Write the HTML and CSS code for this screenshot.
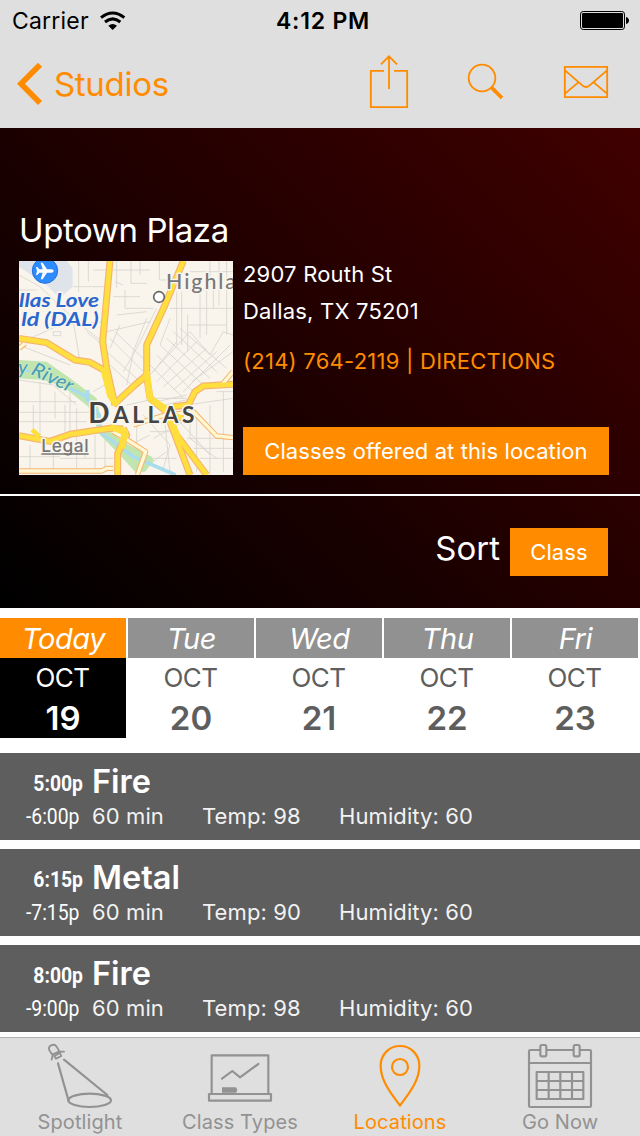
FILE: index.html
```html
<!DOCTYPE html>
<html lang="en">
<head>
    <meta charset="UTF-8">
    <meta name="viewport" content="width=device-width, initial-scale=1.0">
    <title>Uptown Plaza</title>
    <link rel="stylesheet" href="styles.css">
</head>
<body>
    <header class="top">
        <div class="status">
            <div class="carrier">
                <span>Carrier</span>
                <svg class="wifi" viewBox="300 30 78 60">
                    <path d="M303 50Q338 22 373 50" fill="none" stroke="#000" stroke-width="9"/>
                    <path d="M315 63Q338 44 361 63" fill="none" stroke="#000" stroke-width="9"/>
                    <path d="M325 74Q338 64 351 74L338 87Z"/>
                </svg>
            </div>
            <div class="clock">4:12 PM</div>
            <svg class="battery" viewBox="780 33 150 57">
                <rect x="781.5" y="34.5" width="132" height="54" rx="8" fill="none" stroke="#000" stroke-width="3"/>
                <rect x="786" y="39" width="123" height="45" rx="4"/>
                <path d="M918 51q9 3 9 10.500t-9 10.500z"/>
            </svg>
        </div>
        <nav class="nav">
            <a class="back">
                <svg class="chevron" viewBox="48 186 81 132">
                    <path d="M120 194L63 251.500L120 309" fill="none" stroke="#ff8c00" stroke-width="17"/>
                </svg>
                <span>Studios</span>
            </a>
            <div class="actions">
                <svg class="share" viewBox="144 159 126 168">
                    <path d="M192 212.500H152.500V321.500H261.500V212.500H222M207 267V169M183 193L207 169L231 193"/>
                </svg>
                <svg class="search" viewBox="441 186 114 114">
                    <circle cx="486" cy="234" r="40"/>
                    <path d="M514 262L546 294"/>
                </svg>
                <svg class="mail" viewBox="729 195 138 102">
                    <path d="M734.500 200.500H861.500V291.500H734.500ZM735 211L787 256Q798 266 809 256L861 211M735 281L775 247M861 281L821 247"/>
                </svg>
            </div>
        </nav>
    </header>

    <section class="studio">
        <div class="info">
            <h1>Uptown Plaza</h1>
            <div class="detail">
                <svg class="map" viewBox="27 168 642 642">
                    <rect x="27" y="168" width="642" height="642" fill="#f9f5ed"/>
                    <path d="M27 168H170L188 190V245L150 280L110 240L27 185Z" fill="#dfe4ea"/>
                    <g fill="none" stroke="#d6d4ce" stroke-width="2.500">
                        <path d="M190 245H290M206 168V260M235 168V230M250 195H290M27 210L90 245L200 350L290 420M320 168V250M363 168V235H410M390 168V210M310 195H420M315 230L340 240M448 168V225H470M310 275H390M345 255V310H430M320 330L410 320M27 255H80M27 420L180 480M60 400L150 360L280 350M130 380h22v12h-22zM190 350L210 470M230 380L290 430"/>
                        <path d="M500 260V420M515 260V420M533 330V440M570 240V400M590 250V390M610 220V310M650 168V390M480 310H669M530 360H650M480 340L450 420M540 200H669M600 168V235M627 168V300"/>
                        <path d="M300 400L400 500M315 380L410 470M290 440L385 525M300 480L365 540M410 520L540 380L600 450L640 380L669 390M420 480L520 580M440 450L550 560M450 420L580 540M470 400L600 520M490 380L620 500M510 370L650 490M430 500L500 410M440 530L560 410M460 545L590 430M490 555L620 440M520 560L660 420M545 530L669 440M340 500L380 430L440 310M350 540L370 440L410 340M330 360L300 430M290 380L420 350"/>
                        <path d="M27 525L130 540L200 600M90 530V690M27 590H200M27 622H240M27 650H230M70 600V690M135 560V640M165 600V680M180 560V700M200 610V790M250 560L300 530M130 730V800M27 755H150M60 720V800M150 760H310M225 700V760M255 690V800M285 700V790"/>
                        <path d="M440 590L530 570M420 580H530M440 605L550 580M350 600L420 585M380 640V740M400 630L480 720L460 790M420 680H500M430 700L520 650M540 640V700L620 760M560 620V800M600 600V810M640 560V800M530 700H669M550 730H669M570 760H669M530 600L669 580M500 640L600 750M360 720L420 690M400 790L470 740M460 610L480 800M620 560H669M390 760H500"/>
                    </g>
                    <path d="M27 465L110 470L180 520L260 580L275 660L340 710L425 755L432 768L405 800H375L330 750L270 690L235 605L160 545L100 525L27 520Z" fill="#c1e5ae"/>
                    <path d="M180 550L225 572L245 600L268 630L268 680L330 725L370 755L497 810M233 555V590" fill="none" stroke="#a9dcec" stroke-width="11"/>
                    <path d="M27 497H60" stroke="#a9dcec" stroke-width="8"/>
                    <g fill="none" stroke="#f6b36f" stroke-linejoin="round">
                        <path d="M27 798H275L290 790H310M310 680L345 700L407 740L382 810M480 630L550 620L620 693L669 698M480 625L370 660M669 500L635 540M27 430L45 415" stroke-width="16"/>
                        <path d="M300 168L288 300L278 410L290 490L315 600M520 168L465 300L410 420V515L420 580L475 625L520 640M310 600L375 540L410 510M27 400L110 413L195 465L240 472L290 500M27 692L120 709L180 688L300 670L340 672M470 625L495 690L540 810M500 690L590 810M340 670L350 690L323 745V810M490 605L535 600L555 560L580 543L669 538" stroke-width="21"/>
                    </g>
                    <path d="M27 798H275L290 790H310M310 680L345 700L407 740L382 810M480 630L550 620L620 693L669 698M480 625L370 660M669 500L635 540M27 430L45 415" fill="none" stroke="#fff8d2" stroke-width="10"/>
                    <g fill="none" stroke="#ffdf3d" stroke-linejoin="round">
                        <path d="M300 168L288 300L278 410L290 490L315 600M520 168L465 300L410 420V515L420 580L475 625L520 640M310 600L375 540L410 510M27 400L110 413L195 465L240 472L290 500M27 692L120 709L180 688L300 670L340 672M470 625L495 690L540 810M500 690L590 810M340 670L350 690L323 745V810M490 605L535 600L555 560L580 543L669 538" stroke-width="14"/>
                        <path d="M280 490L300 570L320 600M410 500L420 580L480 620M300 665L345 680L335 730M480 640L510 710" stroke-width="19"/>
                        <path d="M66 674L88 694" stroke-width="14"/>
                    </g>
                    <circle cx="105" cy="197" r="38" fill="#2f8cff" stroke="#1e6fe0" stroke-width="3"/>
                    <path d="M131 198Q131 193 124 193H111L98 173H92L98 193H88L82 186H78L81 198L78 210H82L88 203H98L92 223H98L111 203H124Q131 203 131 198Z" fill="#fff"/>
                    <circle cx="447" cy="276" r="16" fill="#fff" stroke="#666" stroke-width="5"/>
                    <g class="labels">
                        <text class="airport" x="27" y="305" textLength="240" lengthAdjust="spacingAndGlyphs">llas Love</text>
                        <text class="airport" x="34" y="364" textLength="232" lengthAdjust="spacingAndGlyphs">ld (DAL)</text>
                        <text class="area" x="468" y="251" textLength="210">Highla</text>
                        <text class="river" transform="translate(24 506) rotate(2)">y</text>
                        <text class="river" transform="translate(60 507) rotate(25)" textLength="132" lengthAdjust="spacingAndGlyphs">River</text>
                        <text class="city" x="235" y="655" textLength="318"><tspan class="cap">D</tspan>ALLAS</text>
                        <text class="legal" x="94" y="741" textLength="142">Legal</text>
                    </g>
                    <path d="M94 747H236" stroke="#777" stroke-width="4"/>
                </svg>
                <div class="contact">
                    <div class="street">2907 Routh St</div>
                    <div class="city-line">Dallas, TX 75201</div>
                    <div class="links"><a>(214) 764-2119</a> | <a>DIRECTIONS</a></div>
                    <a class="btn offered">Classes offered at this location</a>
                </div>
            </div>
        </div>
        <div class="sort">
            <span class="sort-label">Sort</span>
            <a class="btn sort-btn">Class</a>
        </div>
    </section>

    <section class="days">
        <div class="day today"><div class="name">Today</div><div class="month">OCT</div><div class="date">19</div></div>
        <div class="day"><div class="name">Tue</div><div class="month">OCT</div><div class="date">20</div></div>
        <div class="day"><div class="name">Wed</div><div class="month">OCT</div><div class="date">21</div></div>
        <div class="day"><div class="name">Thu</div><div class="month">OCT</div><div class="date">22</div></div>
        <div class="day"><div class="name">Fri</div><div class="month">OCT</div><div class="date">23</div></div>
    </section>

    <main class="classes">
        <div class="class">
            <div class="time"><b>5:00p</b><span>-6:00p</span></div>
            <div class="about">
                <h2>Fire</h2>
                <div class="facts"><span>60 min</span><span>Temp: 98</span><span>Humidity: 60</span></div>
            </div>
        </div>
        <div class="class">
            <div class="time"><b>6:15p</b><span>-7:15p</span></div>
            <div class="about">
                <h2>Metal</h2>
                <div class="facts"><span>60 min</span><span>Temp: 90</span><span>Humidity: 60</span></div>
            </div>
        </div>
        <div class="class">
            <div class="time"><b>8:00p</b><span>-9:00p</span></div>
            <div class="about">
                <h2>Fire</h2>
                <div class="facts"><span>60 min</span><span>Temp: 98</span><span>Humidity: 60</span></div>
            </div>
        </div>
    </main>

    <footer class="tabs">
        <a class="tab">
            <svg viewBox="132 48 216 204">
                <path d="M174 115L206 228M192 104L322 210"/>
                <ellipse cx="269" cy="226" rx="64" ry="20"/>
                <path class="lamp" d="M157 89L148 76Q144 66 153 61Q164 56 170 65L178 79M157 89L178 79M163 93L180 84L184 93L168 101ZM155 104L158 90M179 79L192 80"/>
            </svg>
            <span>Spotlight</span>
        </a>
        <a class="tab">
            <svg viewBox="612 48 216 204">
                <path d="M635 206V91H805V206M627 207H813V227H627ZM666 161L697 138L720 157L775 117"/>
                <path class="solid" d="M666 187H708L712 194L709 203H666Z"/>
            </svg>
            <span>Class Types</span>
        </a>
        <a class="tab active">
            <svg viewBox="132 48 216 204">
                <path d="M240 242C222 216 182 172 182 123C182 88 208 63 240 63S298 88 298 123C298 172 258 216 240 242Z"/>
                <circle cx="240" cy="126" r="24"/>
            </svg>
            <span>Locations</span>
        </a>
        <a class="tab">
            <svg viewBox="612 48 216 204">
                <path d="M659 75H631Q627 75 627 79V242Q627 246 631 246H809Q813 246 813 242V79Q813 75 809 75H781M681 75H759M627 114H813"/>
                <rect x="661" y="60" width="18" height="34" rx="5"/>
                <rect x="761" y="60" width="18" height="34" rx="5"/>
                <path d="M650 141H790V222H650ZM650 168H790M650 195H790M686 141V222M721 141V222M756 141V222"/>
            </svg>
            <span>Go Now</span>
        </a>
    </footer>
</body>
</html>
```

FILE: styles.css
```css
* {
    box-sizing: border-box;
}
body {
    margin: 0;
    width: 640px;
    height: 1136px;
    overflow: hidden;
    background-color: #fff;
    font-family: Inter, "Liberation Sans", sans-serif;
    color: #fff;
    white-space: nowrap;
}
svg {
    display: block;
    flex: none;
}

/* header */
.top {
    height: 128px;
    background-color: #dfdfdf;
}
.status {
    display: grid;
    grid-template-columns: 1fr auto 1fr;
    align-items: center;
    height: 41px;
    padding: 0 10px 0 12px;
    color: #000;
    font-size: 23px;
}
.carrier {
    display: flex;
    align-items: center;
    gap: 11px;
    letter-spacing: 0.2px;
}
.wifi {
    width: 26px;
    height: 20px;
}
.clock {
    padding-left: 4px;
    font-weight: 600;
    letter-spacing: 0.8px;
}
.battery {
    width: 50px;
    height: 19px;
    justify-self: end;
}
.nav {
    display: flex;
    justify-content: space-between;
    height: 87px;
    padding: 0 31px 0 16px;
}
.back {
    display: flex;
    align-items: center;
    gap: 11px;
    height: 86px;
    color: #ff8c00;
    font-size: 33px;
    letter-spacing: -0.3px;
}
.chevron {
    width: 27px;
    height: 44px;
}
.actions {
    display: flex;
    align-items: center;
    gap: 58px;
    height: 80px;
}
.actions svg {
    fill: none;
    stroke: #ff8c00;
    stroke-width: 5.5px;
}
.share {
    width: 42px;
    height: 56px;
    margin-right: -1px;
}
.search {
    width: 38px;
    height: 38px;
}
.actions .search path {
    stroke-width: 11px;
}
.mail {
    width: 46px;
    height: 34px;
    margin-top: 2px;
}

/* studio */
.studio {
    height: 480px;
    background: linear-gradient(45deg, #000, #400000);
}
.info {
    height: 368px;
    padding: 82px 31px 0 19px;
    border-bottom: 2px solid #fff;
}
h1 {
    margin: 0;
    height: 51px;
    font-size: 33px;
    font-weight: 400;
    line-height: 41px;
    letter-spacing: -0.4px;
}
.detail {
    display: flex;
    gap: 10px;
}
.map {
    width: 214px;
    height: 214px;
}
.labels {
    font-family: Lato, sans-serif;
    font-weight: 700;
    paint-order: stroke;
    stroke: #f9f5ed;
    stroke-width: 9px;
    stroke-linejoin: round;
}
.airport {
    fill: #2a66d0;
    font-size: 57px;
    font-style: italic;
}
.area {
    fill: #777;
    font-size: 64px;
    font-weight: 500;
}
.river {
    fill: #4a9fb5;
    stroke: #d7eed0;
    stroke-width: 4px;
    font-size: 58px;
    font-style: italic;
    font-weight: 500;
}
.city {
    fill: #444;
    font-size: 68px;
}
.cap {
    font-size: 84px;
}
.legal {
    fill: #777;
    font-family: Inter, sans-serif;
    font-size: 52px;
    font-weight: 500;
}
.contact {
    display: flex;
    flex-direction: column;
    width: 366px;
    font-size: 22px;
    line-height: 26px;
    letter-spacing: 0.2px;
}
.street {
    height: 37px;
}
.city-line {
    height: 50px;
}
.links {
    color: #ff8c00;
    letter-spacing: 0.25px;
}
.btn {
    height: 48px;
    background-color: #ff8c00;
    font-size: 22px;
    line-height: 48px;
    letter-spacing: 0.1px;
    text-align: center;
}
.offered {
    margin-top: auto;
}
.sort {
    display: flex;
    justify-content: flex-end;
    gap: 10px;
    padding: 32px 32px 0 0;
}
.sort-label {
    font-size: 33px;
    line-height: 41px;
}
.sort-btn {
    width: 98px;
}

/* days */
.days {
    display: grid;
    grid-template-columns: repeat(5, 126px);
    gap: 2px;
    padding-top: 10px;
    color: #5e5e5e;
    text-align: center;
}
.day {
    height: 120px;
}
.name {
    height: 40px;
    background-color: #919191;
    color: #fff;
    font-size: 29px;
    font-style: italic;
    font-weight: 400;
    line-height: 41px;
    letter-spacing: -0.4px;
    text-indent: 1px;
}
.month {
    font-size: 26px;
    line-height: 40px;
    letter-spacing: -0.5px;
    text-indent: -1px;
}
.date {
    font-size: 33px;
    font-weight: 600;
    line-height: 40px;
}
.today {
    background-color: #000;
    color: #fff;
}
.today .name {
    background-color: #ff8c00;
}

/* classes */
.classes {
    display: flex;
    flex-direction: column;
    gap: 9px;
    padding-top: 15px;
}
.class {
    display: flex;
    gap: 9px;
    height: 87px;
    padding-top: 9px;
    background-color: #5e5e5e;
}
.time {
    display: flex;
    flex-direction: column;
    width: 83px;
    font-family: Roboto, sans-serif;
    font-size: 22px;
    line-height: 34px;
    text-align: right;
}
.time b {
    padding-top: 5px;
    line-height: 34px;
    transform: scaleX(0.88);
    transform-origin: right;
}
.time span {
    padding-right: 4px;
    line-height: 31px;
    transform: scaleX(0.88);
    transform-origin: right;
}
h2 {
    margin: 0;
    font-size: 32.5px;
    font-weight: 600;
    line-height: 40px;
}
.facts {
    display: grid;
    grid-template-columns: 110px 137px auto;
    color: #f2f2f2;
    font-size: 22px;
    line-height: 28px;
    letter-spacing: 0.1px;
}

/* tabs */
.tabs {
    display: grid;
    grid-template-columns: repeat(4, 1fr);
    height: 99px;
    margin-top: 5px;
    border-top: 1px solid #b2b2b2;
    background-color: #dfdfdf;
}
.tab {
    display: flex;
    flex-direction: column;
    align-items: center;
    padding-top: 3px;
    color: #929292;
    font-size: 20px;
    line-height: 26px;
    letter-spacing: 0.1px;
}
.tab svg {
    width: 72px;
    height: 68px;
    fill: none;
    stroke: currentColor;
    stroke-width: 6.5px;
    stroke-linecap: round;
    stroke-linejoin: round;
}
.tab .lamp {
    stroke-width: 5.5px;
}
.tab .solid {
    fill: currentColor;
    stroke: none;
}
.active {
    color: #ff8c00;
}
```
